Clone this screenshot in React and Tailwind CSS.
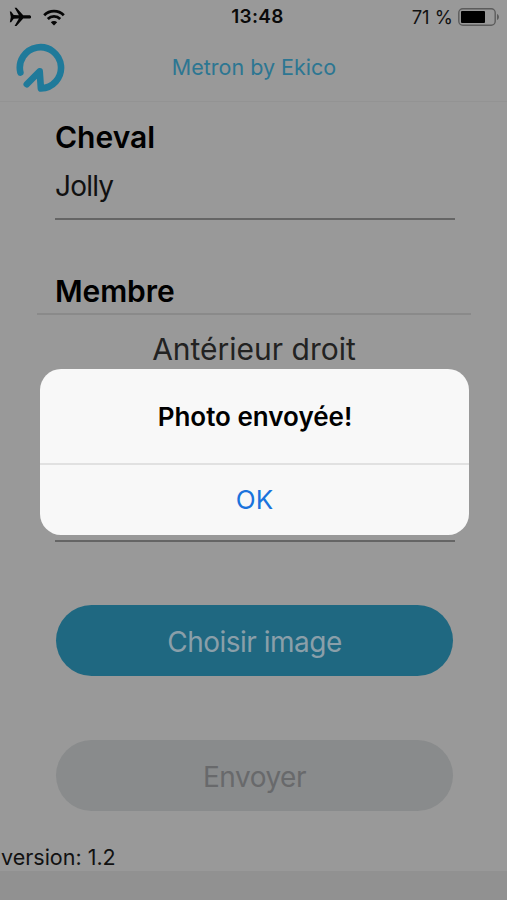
function PlaneIcon() {
  return (
    <svg width="23" height="20" viewBox="0 0 23 20" className="shrink-0">
      <path
        d="M.8 4.6h1.3l2.6 3.5 5.2.2L5.6.8h1.9l6.7 7.5h6c1.1 0 1.9.7 1.9 1.6s-.8 1.6-1.9 1.6h-6L7.5 19H5.6l4.3-7.5-5.2.2-2.6 3.5H.8l1-5.3z"
        fill="#050505"
      />
    </svg>
  )
}

function WifiIcon() {
  return (
    <svg width="22" height="17" viewBox="0 0 22 17" className="shrink-0">
      <g fill="none" stroke="#050505" strokeWidth="2.8">
        <path d="M1.2 6.2a13.9 13.9 0 0 1 19.6 0" />
        <path d="M4.8 10a8.8 8.8 0 0 1 12.4 0" />
      </g>
      <path d="M11 16.4l-3.2-3.2a4.6 4.6 0 0 1 6.4 0z" fill="#050505" />
    </svg>
  )
}

function BatteryIcon() {
  return (
    <svg width="42" height="18" viewBox="0 0 42 18" className="shrink-0">
      <rect x=".8" y=".8" width="36.4" height="16.4" rx="4" fill="none" stroke="#5c5c5c" strokeWidth="1.4" />
      <rect x="3" y="3" width="24" height="12" rx="1" fill="#000" />
      <path d="M39 6c2.6.7 2.6 5.3 0 6z" fill="#5c5c5c" />
    </svg>
  )
}

function Logo() {
  return (
    <svg width="50" height="50" viewBox="0 0 50 50" className="shrink-0">
      <path
        d="M4.4 29.6A20.6 20.6 0 1 1 24.9 45.4L23.7 28.2L10.8 41.2"
        fill="none"
        stroke="#1f7a9a"
        strokeWidth="6.6"
        strokeLinecap="round"
        strokeLinejoin="round"
      />
    </svg>
  )
}

function StatusBar() {
  return (
    <div className="grid h-[34px] shrink-0 grid-cols-3 items-center pl-[9px] pr-[7px]">
      <div className="flex items-center gap-[11px]">
        <PlaneIcon />
        <WifiIcon />
      </div>
      <span className="pl-1.5 pt-px text-center text-[19px] font-semibold tracking-[0.3px] text-[#0a0a0a]">13:48</span>
      <div className="flex items-center justify-end gap-[5px]">
        <span className="whitespace-nowrap pt-px text-[18.5px] text-[#111]">71 %</span>
        <BatteryIcon />
      </div>
    </div>
  )
}

function Dialog() {
  return (
    <div
      role="alertdialog"
      className="absolute left-[40px] top-[369px] flex h-[166px] w-[429px] flex-col overflow-hidden rounded-[21px] bg-[#f8f8f8] text-center"
    >
      <p className="h-[96px] border-b-2 border-[#e1e1e1] pl-px text-[26px] font-semibold leading-[95px] text-black">
        Photo envoyée!
      </p>
      <button className="h-[70px] text-[26px] leading-[70px] text-[#1a73dc]">OK</button>
    </div>
  )
}

export default function App() {
  return (
    <div className="relative flex h-[900px] w-[507px] flex-col overflow-hidden bg-[#999] font-['Inter',sans-serif]">
      <StatusBar />
      <header className="flex h-[68px] shrink-0 items-center border-b border-[#939393] pl-[16px]">
        <Logo />
        <h1 className="w-[376px] text-center text-[21.5px] text-[#2c7692]">Metron by Ekico</h1>
      </header>

      <main className="shrink-0">
        <section className="ml-[55px] mr-[52px] h-[118px] border-b-2 border-[#656565] pt-[15px]">
          <h2 className="text-[30px] font-semibold leading-[40px] text-black">Cheval</h2>
          <p className="mt-[9px] text-[28px] leading-[40px] tracking-[-0.8px] text-[#111]">Jolly</p>
        </section>

        <section className="h-[320px] pt-[51px]">
          <h2 className="pl-[55px] text-[30px] font-semibold leading-[40px] tracking-[-0.1px] text-black">Membre</h2>
          <div className="ml-[37px] mr-[36px] mt-[2px] border-t-2 border-[#8a8a8a] pt-[14px] text-center text-[30px] leading-[40px] text-[#222]">
            Antérieur droit
          </div>
        </section>
        <div className="ml-[55px] mr-[52px] h-[2px] bg-[#656565]" />

        <div className="flex flex-col gap-[64px] px-[56px] pt-[63px]">
          <button className="h-[71px] w-[397px] rounded-full bg-[#1f6881] pt-[3px] text-[28px] tracking-[-0.5px] text-[#8a9fa9]">
            Choisir image
          </button>
          <button className="h-[71px] w-[397px] rounded-full bg-[#898b8c] pt-[3px] text-[28px] tracking-[-0.5px] text-[#68696b]">
            Envoyer
          </button>
        </div>
        <p className="mt-[32px] pl-px text-[21.5px] leading-[28px] text-[#111]">version: 1.2</p>
      </main>
      <footer className="flex-1 bg-[#919191]" />

      <Dialog />
    </div>
  )
}
